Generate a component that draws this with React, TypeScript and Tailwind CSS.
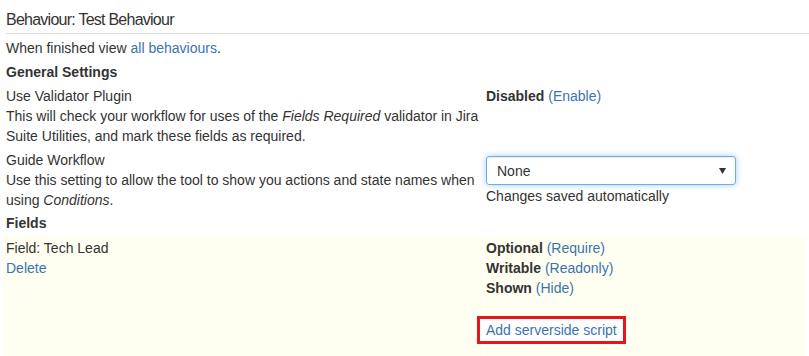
import React from 'react';

const link = 'text-[#3b73af]';

export default function App() {
  return (
    <div className="min-h-screen bg-white text-[#333] text-[14px] leading-[20px] font-['Liberation_Sans',Arial,sans-serif]">
      {/* Heading */}
      <h2 className="ml-[6px] pt-[10px] pb-[3px] border-b border-[#ddd] text-[16px] leading-[20px] tracking-[-0.75px] font-normal">
        Behaviour: Test Behaviour
      </h2>

      <div className="px-[6px] mt-[4px]">
        When finished view <a className={link}>all behaviours</a>.
      </div>
      <div className="px-[6px] mt-[4px] font-bold">General Settings</div>

      {/* General settings rows */}
      <div className="px-[6px] grid grid-cols-[474px_1fr] gap-x-[6px]">
        <div className="mt-[4px]">
          <div>Use Validator Plugin</div>
          <div>
            This will check your workflow for uses of the <i>Fields Required</i> validator in Jira
            Suite Utilities, and mark these fields as required.
          </div>
        </div>
        <div className="mt-[4px]">
          <b>Disabled</b> <a className={link}>(Enable)</a>
        </div>

        <div className="mt-[4px]">
          <div>Guide Workflow</div>
          <div>
            Use this setting to allow the tool to show you actions and state names when using{' '}
            <i>Conditions</i>.
          </div>
        </div>
        <div className="mt-[10px]">
          <div className="w-[250px] h-[29px] flex items-center justify-between pl-[10px] pr-[9px] border border-[#66afe9] rounded-[3px] shadow-[inset_0_1px_1px_rgba(0,0,0,0.075),0_0_6px_rgba(102,175,233,0.6)]">
            <span>None</span>
            <svg width="7" height="6" viewBox="0 0 7 6">
              <path d="M0 0h7L3.5 6z" fill="#333" />
            </svg>
          </div>
          <div className="mt-[1px]">Changes saved automatically</div>
        </div>
      </div>

      <div className="px-[6px] mt-[3px] font-bold">Fields</div>

      {/* Field row */}
      <div className="ml-[3px] mr-[3px] mt-[3px] grid grid-cols-[480px_1fr] gap-x-px bg-white">
        <div className="bg-[#fefff0] pl-[3px] pt-[2px] pb-[20px]">
          <div>Field: Tech Lead</div>
          <a className={link}>Delete</a>
        </div>
        <div className="bg-[#fefff0] pl-[2px] pt-[2px] pb-[20px]">
          <div>
            <b>Optional</b> <a className={link}>(Require)</a>
          </div>
          <div>
            <b>Writable</b> <a className={link}>(Readonly)</a>
          </div>
          <div>
            <b>Shown</b> <a className={link}>(Hide)</a>
          </div>
          <div className="mt-[18px] -ml-[9px] inline-block border-[3px] border-[#e8141c] bg-white pl-[6px] pr-[6px] py-[1px]">
            <a className={link}>Add serverside script</a>
          </div>
        </div>
      </div>
    </div>
  );
}
